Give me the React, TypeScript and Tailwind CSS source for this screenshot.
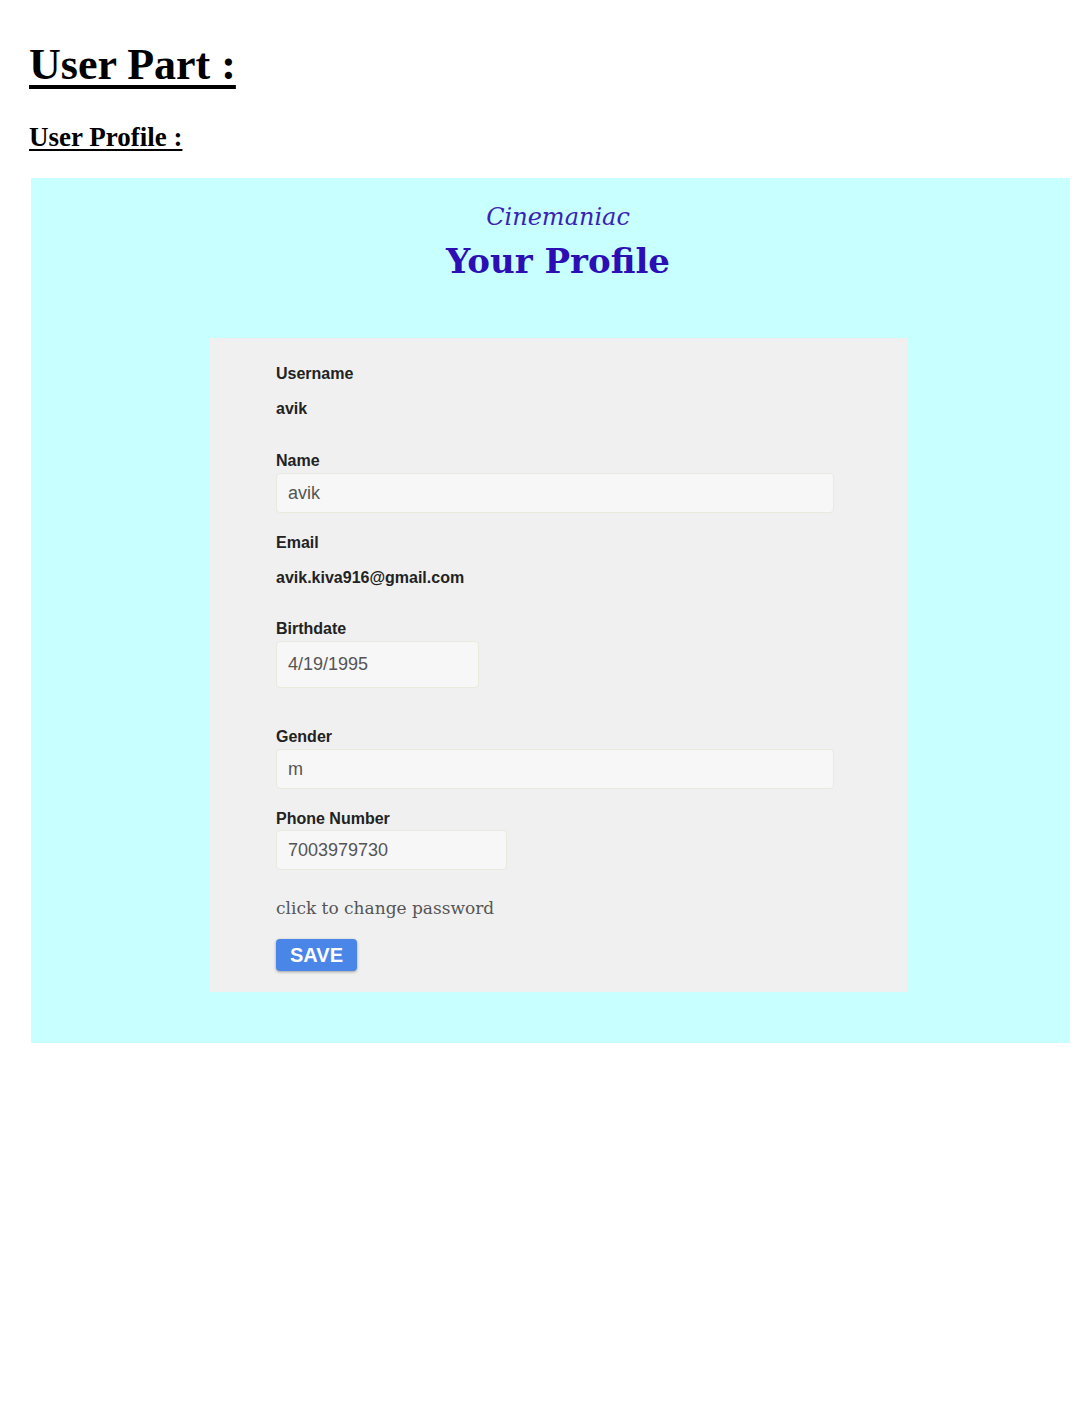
import React from "react";

const serif = "font-['DejaVu_Serif',serif]";
const sans = "font-['Liberation_Sans',Arial,sans-serif]";

function Label({ children, className = "" }: { children: React.ReactNode; className?: string }) {
  return (
    <div className={`${sans} text-[16px] leading-[20px] font-bold text-[#222] ${className}`}>
      {children}
    </div>
  );
}

function Field({ value, className = "" }: { value: string; className?: string }) {
  return (
    <input
      readOnly
      value={value}
      className={`${sans} block bg-[#f7f7f7] border border-[#e9eadd] rounded-[4px] px-[11px] text-[18px] text-[#555] outline-none ${className}`}
    />
  );
}

export default function App() {
  return (
    <div className="min-h-[1405px] bg-white pl-[29px] pr-[10px] pt-[39px]">
      <h1 className="font-['Liberation_Serif',serif] text-[44px] leading-[52px] font-bold underline decoration-[4px] underline-offset-[6px] text-black">
        User Part :
      </h1>
      <h2 className="font-['Liberation_Serif',serif] text-[27px] leading-[30px] font-bold underline decoration-[2px] underline-offset-[3px] text-black mt-[31px]">
        User Profile :
      </h2>

      <div className="bg-[#c8ffff] ml-[2px] w-[1039px] mt-[26px] pt-[23px] pb-[51px]">
        <div className="pl-[15px]">
          <div className={`${serif} italic text-center text-[24px] leading-[32px] text-[#3b22b4]`}>
            Cinemaniac
          </div>
          <div className={`${serif} font-bold text-center text-[34px] leading-[44px] text-[#2b0fb4] mt-[6px]`}>
            Your Profile
          </div>
        </div>

        <div className="bg-[#f0f0f0] ml-[178px] w-[698px] mt-[55px] pt-[26px] pb-[21px] pl-[67px]">
          <Label>Username</Label>
          <Label className="mt-[15px]">avik</Label>

          <Label className="mt-[32px]">Name</Label>
          <Field value="avik" className="w-[558px] h-[40px] mt-[2px]" />

          <Label className="mt-[20px]">Email</Label>
          <Label className="mt-[15px]">avik.kiva916@gmail.com</Label>

          <Label className="mt-[31px]">Birthdate</Label>
          <Field value="4/19/1995" className="w-[203px] h-[47px] mt-[2px]" />

          <Label className="mt-[39px]">Gender</Label>
          <Field value="m" className="w-[558px] h-[40px] mt-[2px]" />

          <Label className="mt-[20px]">Phone Number</Label>
          <Field value="7003979730" className="w-[231px] h-[40px] mt-[1px]" />

          <div className={`${serif} text-[17px] leading-[24px] text-[#555] mt-[26px]`}>
            click to change password
          </div>

          <button
            className={`${sans} block mt-[19px] w-[81px] h-[32px] rounded-[4px] bg-[#4a86e8] text-white font-bold text-[20px] shadow-[0_1px_3px_rgba(0,0,0,0.35)]`}
          >
            SAVE
          </button>
        </div>
      </div>
    </div>
  );
}
